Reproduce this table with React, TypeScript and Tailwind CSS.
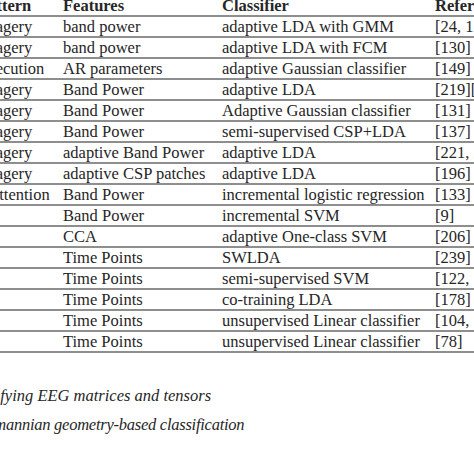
import React from 'react';

type Row = { pattern: string; shift: string; features: string; classifier: string; refs: string };

const mi = 'ml-[-8px]';

const rows: Row[] = [
  { pattern: 'Motor Imagery', shift: mi, features: 'band power', classifier: 'adaptive LDA with GMM', refs: '[24, 123]' },
  { pattern: 'Motor Imagery', shift: mi, features: 'band power', classifier: 'adaptive LDA with FCM', refs: '[130]' },
  { pattern: 'Motor Execution', shift: mi, features: 'AR parameters', classifier: 'adaptive Gaussian classifier', refs: '[149]' },
  { pattern: 'Motor Imagery', shift: mi, features: 'Band Power', classifier: 'adaptive LDA', refs: '[219][120]' },
  { pattern: 'Motor Imagery', shift: mi, features: 'Band Power', classifier: 'Adaptive Gaussian classifier', refs: '[131]' },
  { pattern: 'Motor Imagery', shift: mi, features: 'Band Power', classifier: 'semi-supervised CSP+LDA', refs: '[137]' },
  { pattern: 'Motor Imagery', shift: mi, features: 'adaptive Band Power', classifier: 'adaptive LDA', refs: '[221, 222]' },
  { pattern: 'Motor Imagery', shift: mi, features: 'adaptive CSP patches', classifier: 'adaptive LDA', refs: '[196]' },
  { pattern: 'Visual Attention', shift: 'ml-[2px]', features: 'Band Power', classifier: 'incremental logistic regression', refs: '[133]' },
  { pattern: 'ErrP', shift: 'ml-0', features: 'Band Power', classifier: 'incremental SVM', refs: '[9]' },
  { pattern: 'SSVEP', shift: 'ml-0', features: 'CCA', classifier: 'adaptive One-class SVM', refs: '[206]' },
  { pattern: 'ERP', shift: 'ml-0', features: 'Time Points', classifier: 'SWLDA', refs: '[239]' },
  { pattern: 'ERP', shift: 'ml-0', features: 'Time Points', classifier: 'semi-supervised SVM', refs: '[122, 123]' },
  { pattern: 'ERP', shift: 'ml-0', features: 'Time Points', classifier: 'co-training LDA', refs: '[178]' },
  { pattern: 'ERP', shift: 'ml-0', features: 'Time Points', classifier: 'unsupervised Linear classifier', refs: '[104, 105]' },
  { pattern: 'ERP', shift: 'ml-0', features: 'Time Points', classifier: 'unsupervised Linear classifier', refs: '[78]' },
];

const grid =
  'grid grid-cols-[123px_159px_213px_120px] h-[21px] border-b-2 border-[#8e8e8e] items-center whitespace-nowrap';

export default function App() {
  return (
    <div className="w-[474px] h-[474px] overflow-hidden bg-white text-[#262626] text-[16.5px] leading-[19px] font-['Liberation_Serif',serif]">
      <div className="ml-[-60px] mt-[-4px] w-[620px]">
        <div className={grid + ' font-bold'}>
          <span>EEG pattern</span>
          <span>Features</span>
          <span>Classifier</span>
          <span>References</span>
        </div>
        {rows.map((r, i) => (
          <div key={i} className={grid}>
            <span className={r.shift}>{r.pattern}</span>
            <span>{r.features}</span>
            <span>{r.classifier}</span>
            <span>{r.refs}</span>
          </div>
        ))}
      </div>
      <div className="mt-[33px] italic whitespace-nowrap flex flex-col gap-[10px]">
        <span className="ml-[-41px]">Classifying EEG matrices and tensors</span>
        <span className="ml-[-27px] tracking-[-0.25px]">Riemannian geometry-based classification</span>
      </div>
    </div>
  );
}
